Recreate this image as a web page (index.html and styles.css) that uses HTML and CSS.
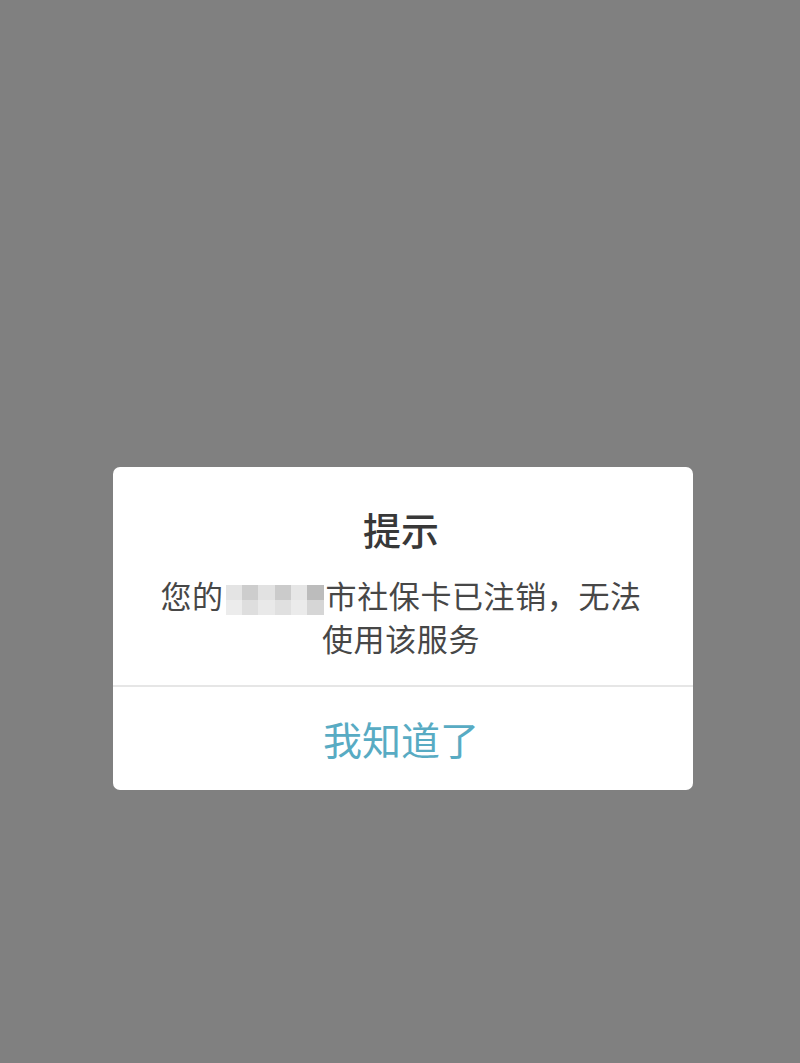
FILE: index.html
```html
<!DOCTYPE html>
<html lang="zh-CN">

<head>
    <meta charset="UTF-8">
    <title>提示</title>
    <link rel="stylesheet" href="styles.css">
</head>

<body>
    <div class="screen">
        <div class="dialog">
            <div class="dialog-body">
                <h1 class="title">提示</h1>
                <p class="message">您的<span class="mosaic"><i></i><i></i><i></i><i></i><i></i><i></i><i></i><i></i><i></i><i></i><i></i><i></i></span>市社保卡已注销，无法<br>使用该服务</p>
            </div>
            <div class="dialog-footer">
                <button class="btn">我知道了</button>
            </div>
        </div>
    </div>
</body>

</html>
```

FILE: styles.css
```css
* {
    padding: 0px;
    margin: 0px;
    box-sizing: border-box;
}

body {
    background: #808080;
    font-family: "Noto Sans CJK SC", "Noto Sans", sans-serif;
}

.screen {
    width: 800px;
    height: 1063px;
    display: flex;
    justify-content: center;
    padding: 467px 0 0 6px;
}

.dialog {
    width: 580px;
    height: 323px;
    background: #fff;
    border-radius: 7px;
    display: flex;
    flex-direction: column;
}

.dialog-body {
    padding: 39px 24px 26px 20px;
    text-align: center;
    border-bottom: 2px solid #e6e6e6;
}

.title {
    font-size: 38px;
    font-weight: 500;
    line-height: 46px;
    color: #383838;
}

.message {
    margin-top: 21px;
    font-size: 31px;
    line-height: 43px;
    letter-spacing: 0.6px;
    color: #474747;
}

/* redacted city name */
.mosaic {
    display: inline-grid;
    grid-template-columns: repeat(6, 1fr);
    width: 98px;
    height: 30px;
    line-height: 0;
    vertical-align: middle;
    margin: 0 2px;
}

.mosaic i:nth-child(1) { background: #e4e4e4; }
.mosaic i:nth-child(2) { background: #cdcdcd; }
.mosaic i:nth-child(3) { background: #e2e2e2; }
.mosaic i:nth-child(4) { background: #cbcbcb; }
.mosaic i:nth-child(5) { background: #e6e6e6; }
.mosaic i:nth-child(6) { background: #bcbcbc; }
.mosaic i:nth-child(7) { background: #ececec; }
.mosaic i:nth-child(8) { background: #dedede; }
.mosaic i:nth-child(9) { background: #e9e9e9; }
.mosaic i:nth-child(10) { background: #e0e0e0; }
.mosaic i:nth-child(11) { background: #ebebeb; }
.mosaic i:nth-child(12) { background: #d6d6d6; }

.dialog-footer {
    flex: 1;
    display: flex;
}

.btn {
    flex: 1;
    border: none;
    background: none;
    font-family: inherit;
    font-size: 39px;
    color: #58abc3;
    padding: 0 4px 2px 0;
}
```
